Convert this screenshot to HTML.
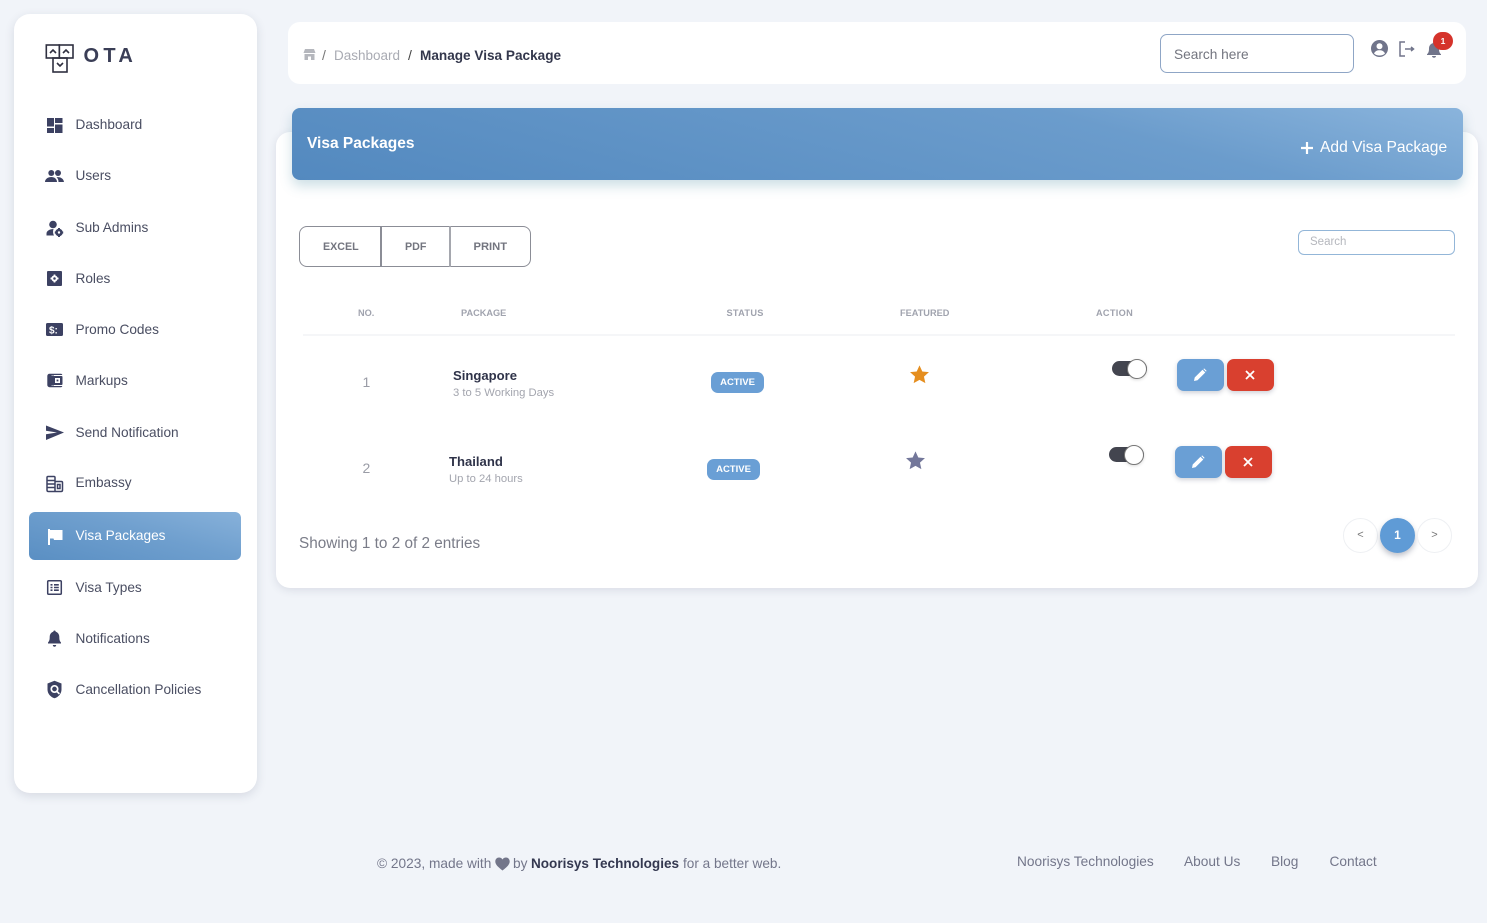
<!DOCTYPE html>
<html lang="en"><head><meta charset="utf-8"><title>Visa Packages</title>
<style>
*{box-sizing:border-box}
html,body{margin:0;padding:0}
body{width:1487px;height:923px;position:relative;overflow:hidden;background:#f1f4f9;font-family:"Liberation Sans",sans-serif;color:#4b4f63}
.a{position:absolute}
.t{position:absolute;white-space:nowrap}
.side{left:14px;top:14px;width:243px;height:779px;background:#fff;border-radius:16px;box-shadow:0 3px 10px rgba(40,50,80,.13)}
.nav{font-size:13.65px;line-height:20px;color:#4a4e62;left:75.5px}
.ic{position:absolute;left:44px;width:21px;height:21px}
.top{left:288px;top:22px;width:1178px;height:62px;background:#fff;border-radius:12px}
.card{left:276px;top:132px;width:1202px;height:456px;background:#fff;border-radius:14px;box-shadow:0 2px 9px rgba(40,50,80,.12)}
.head{left:292px;top:108px;width:1171px;height:72px;border-radius:8px;background:linear-gradient(195deg,#8ab4dc 0%,#6b9ccc 30%,#5389bf 100%);box-shadow:0 6px 12px rgba(90,150,170,.3)}
.th{font-size:9.2px;font-weight:bold;color:#a0a3ae;letter-spacing:.3px;line-height:12px;top:307px}
.name{font-size:13.1px;font-weight:bold;color:#2f3349;line-height:18px}
.sub{font-size:11.25px;color:#a3a5ae;line-height:14px}
.num{font-size:14px;color:#9a9ca6;line-height:18px}
.badge{width:53px;height:21px;border-radius:7px;background:#6a9fd5;color:#fff;font-size:9.5px;font-weight:bold;text-align:center;line-height:21px}
.btn{width:47px;height:32px;border-radius:7px;box-shadow:0 2px 5px rgba(40,50,80,.22)}
.blue{background:#6a9fd5}.red{background:#d9402f}
.btn svg{position:absolute;left:16px;top:9px}
.tog{width:35px;height:15px;background:#43454f;border-radius:8px}
.tog i{position:absolute;right:0;top:-2.5px;width:20px;height:20px;border-radius:50%;background:#fff;border:1px solid #777;box-shadow:0 1px 3px rgba(0,0,0,.15)}
.pg{width:35px;height:35px;border-radius:50%;background:#fff;border:1px solid #eef0f3;color:#777;font-size:11px;text-align:center;line-height:32px}
.foot{font-size:13.7px;color:#73768a;line-height:18px}
</style></head><body>

<div class="a side"></div>
<svg class="a" style="left:45px;top:43px" width="30" height="30" viewBox="0 0 30 30" fill="none" stroke="#2f3040" stroke-width="1.6">
<rect x="1.300" y="2" width="13" height="13"/><rect x="14.300" y="2" width="13.700" height="13"/><rect x="8" y="15" width="14" height="14"/>
<path d="M5 10l3-3 3 3M18 10l3-3 3 3M12 20l3 3 3-3"/></svg>
<div class="t" style="left:83.500px;top:44px;font-size:20px;font-weight:bold;color:#3a3e56;letter-spacing:4.300px;line-height:24px">OTA</div>

<div class="a" style="left:29px;top:512px;width:212px;height:48px;border-radius:6px;background:linear-gradient(195deg,#87b1da 0%,#6f9fce 45%,#5a8fc3 100%)"></div>

<div class="t nav" style="top:115px">Dashboard</div>
<div class="t nav" style="top:166px">Users</div>
<div class="t nav" style="top:218px">Sub Admins</div>
<div class="t nav" style="top:269px">Roles</div>
<div class="t nav" style="top:320px">Promo Codes</div>
<div class="t nav" style="top:371px">Markups</div>
<div class="t nav" style="top:423px">Send Notification</div>
<div class="t nav" style="top:473px">Embassy</div>
<div class="t nav" style="top:526px;color:#fff">Visa Packages</div>
<div class="t nav" style="top:578px">Visa Types</div>
<div class="t nav" style="top:629px">Notifications</div>
<div class="t nav" style="top:680px">Cancellation Policies</div>

<svg class="ic" style="top:115px" viewBox="0 0 21 21" fill="#3c4162"><path d="M3 3h7v8.500H3zM11 3h7.500v5H11zM11 9.500h7.500V18H11zM3 13h7v5H3z"/></svg>
<svg class="ic" style="top:166px" viewBox="0 0 21 21" fill="#3c4162"><circle cx="7.300" cy="7" r="3"/><circle cx="14" cy="7" r="3"/><path d="M1 16c0-3 3-5 6.300-5s5.700 2 5.700 5zM14.500 16c0-2-.6-3.600-2-4.700 3-.8 7 .8 7.500 4.700z"/></svg>
<svg class="ic" style="top:217.500px" viewBox="0 0 21 21" fill="#3c4162"><circle cx="9" cy="6.500" r="3.800"/><path d="M2.500 17.500v-2c0-2.500 3-4.500 7-4.500-.8 2.500-.5 4.800.5 6.500z"/><circle cx="15" cy="14.500" r="2.500" fill="none" stroke="#3c4162" stroke-width="2.600"/><path d="M14 10h2v2h-2zM14 17h2v2h-2zM10.800 13.500h2v2h-2zM17.200 13.500h2v2h-2z"/></svg>
<svg class="ic" style="top:268px" viewBox="0 0 21 21"><rect x="3" y="3" width="15" height="15" rx="1" fill="#3c4162"/><circle cx="10.500" cy="10.500" r="2.200" fill="none" stroke="#fff" stroke-width="1.900"/><path d="M10.500 6.500v1.500M10.500 13v1.500M6.500 10.500H8M13 10.500h1.500" stroke="#fff" stroke-width="1.700"/></svg>
<svg class="ic" style="top:319px" viewBox="0 0 21 21"><rect x="2" y="4" width="17" height="13" rx="1.500" fill="#3c4162"/><text x="5" y="14.500" font-size="10" font-weight="bold" fill="#fff" font-family="Liberation Sans">$:</text></svg>
<svg class="ic" style="top:370px" viewBox="0 0 21 21"><path d="M5.500 3.800h11.500c.6 0 1.200.5 1.300 1.200H8.500C7 5 6.500 6 6.500 7v7c0 1 .5 2 2 2h9.800c-.1.700-.7 1.200-1.300 1.200H5.500c-1.200 0-2.200-1-2.200-2.200V6c0-1.200 1-2.200 2.200-2.200z" fill="#3c4162"/><rect x="5" y="5.500" width="5" height="10" fill="#3c4162"/><rect x="9" y="6" width="9.500" height="9" rx="1" fill="#3c4162"/><rect x="11" y="8" width="5" height="5" fill="#fff"/><rect x="12.600" y="9.600" width="1.800" height="1.800" fill="#3c4162"/></svg>
<svg class="ic" style="top:422px" viewBox="0 0 21 21" fill="#3c4162"><path d="M2 3.500L20 10.500 2 18v-5.700l11-1.800-11-1.800z"/></svg>
<svg class="ic" style="top:473px" viewBox="0 0 21 21" fill="none" stroke="#3c4162" stroke-width="1.500"><path d="M3 17V4.500c0-.6.400-1 1-1h6c.6 0 1 .4 1 1V18.500H4.500C3.600 18.500 3 17.900 3 17zM11 8.500h6.500c.6 0 1 .4 1 1V17c0 .9-.6 1.500-1.500 1.500h-6M3 7.500h8M3 11h8M3 14.500h8"/><rect x="13.500" y="11.500" width="2.500" height="4"/></svg>
<svg class="ic" style="top:526px" viewBox="0 0 21 21" fill="#fff"><path d="M4 3h2v1h12.500v10H10l-.5-1.500H6V19H4z"/></svg>
<svg class="ic" style="top:577px" viewBox="0 0 21 21"><rect x="3.700" y="3.700" width="13.600" height="13.600" rx="1" fill="none" stroke="#3c4162" stroke-width="1.500"/><path d="M6.500 7h2v1.600h-2zM10 7h4.800v1.600H10zM6.500 9.700h2v1.600h-2zM10 9.700h4.800v1.600H10zM6.500 12.400h2V14h-2zM10 12.400h4.800V14H10z" fill="#3c4162"/></svg>
<svg class="ic" style="top:628px" viewBox="0 0 21 21" fill="#3c4162"><path d="M10.500 2.500c.8 0 1.200.6 1.200 1.300 2.500.7 3.600 2.900 3.600 5.200 0 3 .5 4.300 1.700 5.500v1h-13v-1c1.200-1.200 1.700-2.500 1.700-5.500 0-2.300 1.100-4.500 3.600-5.200 0-.7.400-1.300 1.200-1.300z"/><path d="M8.800 17h3.400c0 1-.7 1.700-1.700 1.700S8.800 18 8.800 17z"/></svg>
<svg class="ic" style="top:679px" viewBox="0 0 21 21"><path d="M10.500 1.800l7 2.700v6c0 4.200-3 7.500-7 8.800-4-1.300-7-4.600-7-8.800v-6z" fill="#3c4162"/><circle cx="10.500" cy="10" r="3.200" fill="none" stroke="#fff" stroke-width="1.700"/><path d="M12.800 12.300l2.600 2.600" stroke="#fff" stroke-width="1.700"/></svg>

<div class="a top"></div>
<svg class="a" style="left:303px;top:48px" width="13" height="13" viewBox="0 0 13 13" fill="#b5b7bd"><path d="M2 1h9l1.500 4H.500zM1.500 6h10v6H8V8.500H5V12H1.500z"/></svg>
<div class="t" style="left:322px;top:46px;font-size:14px;line-height:18px;color:#777">/</div>
<div class="t" style="left:334px;top:47px;font-size:13.500px;line-height:18px;color:#a9abb3">Dashboard</div>
<div class="t" style="left:408px;top:46px;font-size:14px;line-height:18px;color:#444">/</div>
<div class="t" style="left:420px;top:47px;font-size:13.600px;line-height:18px;font-weight:bold;color:#33374c">Manage Visa Package</div>

<div class="a" style="left:1160px;top:34px;width:194px;height:39px;border:1px solid #8fa6c6;border-radius:7px;background:#fff"></div>
<div class="t" style="left:1174px;top:46px;font-size:13.700px;line-height:18px;color:#73757f">Search here</div>
<svg class="a" style="left:1370px;top:39px" width="19" height="19" viewBox="0 0 19 19"><circle cx="9.500" cy="9.500" r="8.500" fill="#70748a"/><circle cx="9.500" cy="7.300" r="3" fill="#fff"/><path d="M4 14.500c1-2.400 3-3.300 5.500-3.300s4.500.9 5.500 3.300c-1.300 1.300-3.300 2-5.500 2s-4.200-.7-5.500-2z" fill="#fff"/></svg>
<svg class="a" style="left:1398px;top:40px" width="18" height="18" viewBox="0 0 18 18" fill="none" stroke="#70748a" stroke-width="1.500"><path d="M7 2H2v14h5M7 9h8.500M13 7l2.500 2-2.500 2"/></svg>
<svg class="a" style="left:1425px;top:41px" width="18" height="18" viewBox="0 0 18 18" fill="#70748a"><path d="M9 1c.8 0 1.200.5 1.200 1.200C12.700 2.800 14 5 14 7.500c0 3 .5 4.500 2 5.800v.7H2v-.7c1.500-1.300 2-2.800 2-5.800C4 5 5.300 2.800 7.800 2.200 7.800 1.500 8.200 1 9 1z"/><path d="M7 15h4c0 1-.9 1.800-2 1.800S7 16 7 15z"/></svg>
<div class="a" style="left:1433px;top:32px;width:20px;height:18px;border-radius:9px;background:#d5332b;color:#fff;font-size:8.500px;font-weight:bold;text-align:center;line-height:18px">1</div>

<div class="a card"></div>
<div class="a head"></div>
<div class="t" style="left:307px;top:134px;font-size:15.500px;font-weight:bold;color:#fff;line-height:20px">Visa Packages</div>
<svg class="a" style="left:1300px;top:141px" width="14" height="14" viewBox="0 0 14 14" stroke="#fff" stroke-width="2.200"><path d="M7 1v12M1 7h12"/></svg>
<div class="t" style="left:1320px;top:138px;font-size:15.600px;color:#fff;line-height:20px">Add Visa Package</div>

<div class="a" style="left:299px;top:226px;width:232px;height:41px;border:1px solid #8b8d96;border-radius:8px;background:#fff"></div>
<div class="a" style="left:380px;top:226px;width:2px;height:41px;background:#8b8d96"></div>
<div class="a" style="left:449px;top:226px;width:1.500px;height:41px;background:#a5a7ae"></div>
<div class="t" style="left:323px;top:240px;font-size:10.700px;line-height:14px;font-weight:bold;color:#73757f">EXCEL</div>
<div class="t" style="left:405px;top:240px;font-size:10.700px;line-height:14px;font-weight:bold;color:#73757f">PDF</div>
<div class="t" style="left:473.500px;top:240px;font-size:11.200px;line-height:14px;font-weight:bold;color:#73757f">PRINT</div>

<div class="a" style="left:1298px;top:230px;width:157px;height:25px;border:1px solid #93b6d8;border-radius:6px;background:#fff"></div>
<div class="t" style="left:1310px;top:235px;font-size:11.500px;line-height:14px;color:#b5b7bd">Search</div>

<div class="t th" style="left:358px;letter-spacing:0">NO.</div>
<div class="t th" style="left:461px;letter-spacing:0">PACKAGE</div>
<div class="t th" style="left:726.500px">STATUS</div>
<div class="t th" style="left:900px;letter-spacing:0">FEATURED</div>
<div class="t th" style="left:1096px">ACTION</div>
<div class="a" style="left:303px;top:334px;width:1152px;height:2px;background:#f5f6f8"></div>

<div class="t num" style="left:362.500px;top:373px">1</div>
<div class="t name" style="left:453px;top:367px">Singapore</div>
<div class="t sub" style="left:453px;top:386px">3 to 5 Working Days</div>
<div class="a badge" style="left:711px;top:372px">ACTIVE</div>
<svg class="a" style="left:909px;top:364px" width="21" height="21" viewBox="0 0 24 24" fill="#e58e1f"><path d="M12 1.500l3.200 7 7.600.8-5.700 5.100 1.600 7.500L12 18.100l-6.700 3.800 1.600-7.500-5.700-5.100 7.600-.8z"/></svg>
<div class="a tog" style="left:1112px;top:361px"><i></i></div>
<div class="a btn blue" style="left:1177px;top:359px"><svg width="14" height="14" viewBox="0 0 14 14" fill="#fff"><path d="M1 13l.7-3.500L9.500 1.700l2.800 2.800-7.800 7.800zM10.300 1l1-.5 2.200 2.200-.5 1z"/></svg></div>
<div class="a btn red" style="left:1227px;top:359px"><svg width="14" height="14" viewBox="0 0 14 14" stroke="#fff" stroke-width="1.800"><path d="M3 3l8 8M11 3l-8 8"/></svg></div>

<div class="t num" style="left:362.500px;top:459px">2</div>
<div class="t name" style="left:449px;top:453px">Thailand</div>
<div class="t sub" style="left:449px;top:472px">Up to 24 hours</div>
<div class="a badge" style="left:707px;top:458.500px">ACTIVE</div>
<svg class="a" style="left:905px;top:450px" width="21" height="21" viewBox="0 0 24 24" fill="#73779a"><path d="M12 1.500l3.200 7 7.600.8-5.700 5.100 1.600 7.500L12 18.100l-6.700 3.800 1.600-7.500-5.700-5.100 7.600-.8z"/></svg>
<div class="a tog" style="left:1109px;top:447px"><i></i></div>
<div class="a btn blue" style="left:1175px;top:446px"><svg width="14" height="14" viewBox="0 0 14 14" fill="#fff"><path d="M1 13l.7-3.500L9.500 1.700l2.800 2.800-7.800 7.800zM10.300 1l1-.5 2.200 2.200-.5 1z"/></svg></div>
<div class="a btn red" style="left:1225px;top:446px"><svg width="14" height="14" viewBox="0 0 14 14" stroke="#fff" stroke-width="1.800"><path d="M3 3l8 8M11 3l-8 8"/></svg></div>

<div class="t" style="left:299px;top:534px;font-size:15.300px;line-height:20px;color:#7a7c88">Showing 1 to 2 of 2 entries</div>
<div class="a pg" style="left:1343px;top:518px">&lt;</div>
<div class="a pg" style="left:1380px;top:518px;background:#5f9bd6;border-color:#5f9bd6;color:#fff;font-weight:bold;font-size:12px;box-shadow:0 3px 6px rgba(40,50,80,.3)">1</div>
<div class="a pg" style="left:1417px;top:518px">&gt;</div>

<div class="t foot" style="left:377px;top:855px">© 2023, made with</div>
<svg class="a" style="left:495px;top:857px" width="15" height="14" viewBox="0 0 15 14" fill="#73768a"><path d="M7.500 13.500C3 10 .3 7.500.3 4.500.3 2 2 .5 4 .5c1.500 0 2.800.8 3.500 2C8.200 1.300 9.500.5 11 .5c2 0 3.700 1.500 3.700 4 0 3-2.700 5.500-7.200 9z"/></svg>
<div class="t foot" style="left:513px;top:855px">by</div>
<div class="t foot" style="left:531px;top:855px;font-weight:bold;color:#343850;font-size:13.550px">Noorisys Technologies</div>
<div class="t foot" style="left:683px;top:855px;font-size:13.600px">for a better web.</div>
<div class="t foot" style="left:1017px;top:852.500px">Noorisys Technologies</div>
<div class="t foot" style="left:1184px;top:852.500px">About Us</div>
<div class="t foot" style="left:1271px;top:852.500px">Blog</div>
<div class="t foot" style="left:1329.500px;top:852.500px">Contact</div>

</body></html>
